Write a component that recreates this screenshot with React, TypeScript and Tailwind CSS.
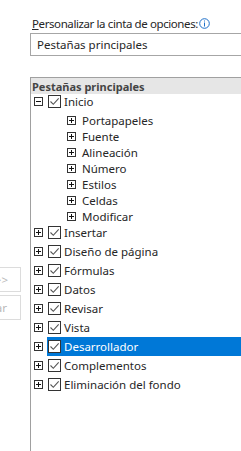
import React from 'react';

const font = { fontFamily: '"Segoe UI", "Noto Sans", sans-serif' };

function Expander({ open }: { open?: boolean }) {
  return (
    <svg width="9" height="9" viewBox="0 0 9 9" className="shrink-0">
      <rect x="0.5" y="0.5" width="8" height="8" fill="#fff" stroke="#333" />
      <path d="M2 4.5h5" stroke="#111" />
      {!open && <path d="M4.5 2v5" stroke="#111" />}
    </svg>
  );
}

function Check() {
  return (
    <svg width="13" height="13" viewBox="0 0 13 13" className="shrink-0">
      <rect x="0.5" y="0.5" width="12" height="12" fill="#fff" stroke="#333" />
      <path d="M2.5 6.5l2.8 2.8 5.4-6" fill="none" stroke="#555" strokeWidth="1.1" />
    </svg>
  );
}

const groups = ['Portapapeles', 'Fuente', 'Alineación', 'Número', 'Estilos', 'Celdas', 'Modificar'];

const tabs = [
  'Insertar',
  'Diseño de página',
  'Fórmulas',
  'Datos',
  'Revisar',
  'Vista',
  'Desarrollador',
  'Complementos',
  'Eliminación del fondo',
];

export default function App() {
  return (
    <div
      className="w-[241px] h-[451px] bg-white overflow-hidden flex text-[11.5px] leading-[15px] text-[#262626]"
      style={font}
    >
      <div className="w-[30px] shrink-0 pt-[267px] flex flex-col gap-[3px]">
        <button className="ml-[-60px] w-[81px] h-[25px] border border-[#dcdcdc] bg-white text-right pr-[12px] text-[#b8b8b8]">
          Agregar &gt;&gt;
        </button>
        <button className="ml-[-60px] w-[81px] h-[25px] border border-[#dcdcdc] bg-white text-right pr-[13px] text-[#b8b8b8]">
          &lt;&lt; Quitar
        </button>
      </div>

      <div className="w-[240px] shrink-0 flex flex-col">
        <div className="pt-[15px] pl-[2px] h-[31px] flex items-center">
          <span className="tracking-[-0.4px]">
            <span className="underline">P</span>ersonalizar la cinta de opciones:
          </span>
          <svg width="11" height="11" viewBox="0 0 11 11" className="ml-[1px]">
            <circle cx="5.5" cy="5.5" r="4.8" fill="none" stroke="#1d6fc8" />
            <rect x="5" y="2.5" width="1" height="1" fill="#1d6fc8" />
            <rect x="5" y="4.5" width="1" height="4" fill="#1d6fc8" />
          </svg>
        </div>

        <div className="mt-[2px] h-[23px] border border-[#a6a6a6] flex items-center pl-[6px]">
          Pestañas principales
        </div>

        <div className="mt-[21px] flex-1 border-l border-t border-[#a0a0a0]">
          <div className="h-[16px] bg-[#e6e6e6] flex items-center pl-[1px] font-bold text-[11px] text-[#444]">
            Pestañas principales
          </div>

          <div className="h-[14px] flex items-center pl-[3px]">
            <Expander open />
            <div className="ml-[5px] flex items-center">
              <Check />
              <span className="ml-[3px]">Inicio</span>
            </div>
          </div>

          <div className="pt-[4px] mb-[-1px]">
            {groups.map((g) => (
              <div key={g} className="h-[16px] flex items-center pl-[36px]">
                <Expander />
                <span className="ml-[6px]">{g}</span>
              </div>
            ))}
          </div>

          {tabs.map((t) => {
            const sel = t === 'Desarrollador';
            return (
              <div key={t} className="h-[19px] flex items-center pl-[3px]">
                <Expander />
                <div
                  className={
                    'ml-[4px] pl-[1px] h-full flex-1 flex items-center ' +
                    (sel ? 'bg-[#0078d7] text-white' : '')
                  }
                >
                  <Check />
                  <span className="ml-[3px]">{t}</span>
                </div>
              </div>
            );
          })}
        </div>
      </div>
    </div>
  );
}
